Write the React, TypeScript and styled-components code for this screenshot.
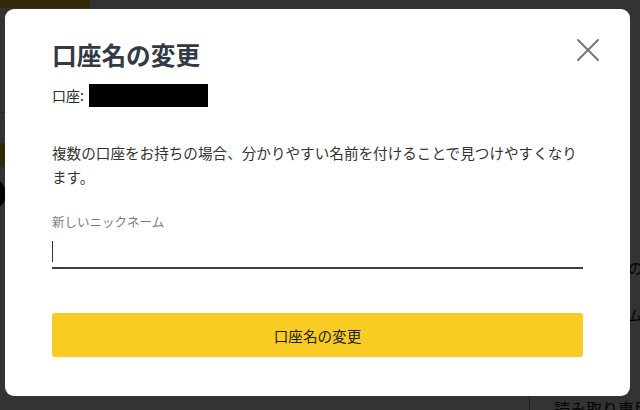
import React from "react";
import styled, { createGlobalStyle } from "styled-components";

const GlobalStyle = createGlobalStyle`
  html, body {
    margin: 0;
    padding: 0;
    overflow: hidden;
  }
  body {
    font-family: "Noto Sans CJK JP", "Noto Sans", sans-serif;
    background: #ffffff;
  }
`;

// the page behind the dialog, dimmed by the overlay
const BackPage = styled.div`
  height: 410px;
  display: flex;
  flex-direction: column;
  background: #ffffff;
`;

const TopTab = styled.div`
  width: 90px;
  height: 8px;
  background: #f7cb23;
`;

const BackBody = styled.div`
  flex: 1;
  display: flex;
  justify-content: space-between;
`;

const LeftRail = styled.div`
  width: 8px;
  display: flex;
  flex-direction: column;
  padding-top: 104px;
`;

const RailLine = styled.div`
  height: 1px;
  background: #cccccc;
  margin-bottom: 30px;
`;

const RailBar = styled.div`
  height: 24px;
  background: #f7cb23;
  margin-bottom: 10px;
`;

const RailDot = styled.div`
  width: 34px;
  height: 34px;
  border-radius: 50%;
  background: #111111;
  margin-left: -28px;
`;

const RightRail = styled.div`
  width: 12px;
  overflow: hidden;
  white-space: nowrap;
  padding-top: 248px;
  font-size: 15px;
  line-height: 24px;
  color: #111111;
  display: flex;
  flex-direction: column;
  gap: 23px;
`;

const BackFooter = styled.div`
  height: 14px;
  display: flex;
  justify-content: flex-end;
  overflow: hidden;
`;

const FooterCell = styled.div`
  width: 86px;
  border-left: 1px solid #999999;
  padding-left: 24px;
  font-size: 16px;
  line-height: 24px;
  white-space: nowrap;
  color: #111111;
`;

const Overlay = styled.div`
  position: fixed;
  inset: 0;
  background: rgba(0, 0, 0, 0.8);
  padding: 9px 10px 14px 5px;
  box-sizing: border-box;
  display: flex;
  align-items: flex-start;
`;

const Dialog = styled.div`
  width: 625px;
  height: 387px;
  box-sizing: border-box;
  background: #ffffff;
  border-radius: 9px;
  padding: 29px 47px 0 47px;
  display: flex;
  flex-direction: column;
`;

const Header = styled.div`
  display: flex;
  justify-content: space-between;
  align-items: flex-start;
`;

const Title = styled.h2`
  margin: 0;
  font-size: 24.7px;
  line-height: 32px;
  font-weight: 700;
  color: #333a43;
`;

const CloseButton = styled.button`
  border: none;
  background: none;
  padding: 0;
  margin: 0 -17px 0 0;
  width: 24px;
  height: 24px;
  cursor: pointer;
  display: flex;
  align-items: center;
  justify-content: center;
`;

const AccountRow = styled.div`
  margin-top: 13px;
  display: flex;
  align-items: center;
  gap: 4px;
  height: 24px;
  font-size: 14px;
  color: #2b2b2b;
`;

const Redacted = styled.div`
  width: 119px;
  height: 23px;
  margin-left: 1px;
  background: #000000;
`;

const Description = styled.p`
  margin: 34px 0 0;
  font-size: 14.6px;
  line-height: 23.5px;
  color: #333333;
`;

const FieldLabel = styled.label`
  margin-top: 25px;
  display: block;
  font-size: 12.5px;
  line-height: 18px;
  color: #7a7a7a;
`;

const InputBox = styled.div`
  margin-top: 3px;
  height: 31px;
  border-bottom: 2px solid #3a3f46;
  display: flex;
  align-items: center;
  padding-top: 2px;
`;

const Caret = styled.span`
  width: 1px;
  height: 21px;
  background: #333333;
`;

const SubmitButton = styled.button`
  margin-top: 44px;
  height: 44px;
  border: none;
  border-radius: 3px;
  background: #f8cc22;
  font-family: inherit;
  font-size: 14.6px;
  color: #1e1e1e;
  cursor: pointer;
`;

const CloseIcon = () => (
  <svg width="22" height="22" viewBox="0 0 22 22">
    <path
      d="M1 1 L21 21 M21 1 L1 21"
      stroke="#777777"
      strokeWidth="2"
      strokeLinecap="round"
      fill="none"
    />
  </svg>
);

const App: React.FC = () => {
  return (
    <>
      <GlobalStyle />
      <BackPage>
        <TopTab />
        <BackBody>
          <LeftRail>
            <RailLine />
            <RailBar />
            <RailDot />
          </LeftRail>
          <RightRail>
            <span>の設定</span>
            <span>ム</span>
          </RightRail>
        </BackBody>
        <BackFooter>
          <FooterCell>読み取り専用</FooterCell>
        </BackFooter>
      </BackPage>
      <Overlay>
        <Dialog>
          <Header>
            <Title>口座名の変更</Title>
            <CloseButton aria-label="閉じる">
              <CloseIcon />
            </CloseButton>
          </Header>
          <AccountRow>
            口座:
            <Redacted />
          </AccountRow>
          <Description>
            複数の口座をお持ちの場合、分かりやすい名前を付けることで見つけやすくなります。
          </Description>
          <FieldLabel>新しいニックネーム</FieldLabel>
          <InputBox>
            <Caret />
          </InputBox>
          <SubmitButton>口座名の変更</SubmitButton>
        </Dialog>
      </Overlay>
    </>
  );
};

export default App;
